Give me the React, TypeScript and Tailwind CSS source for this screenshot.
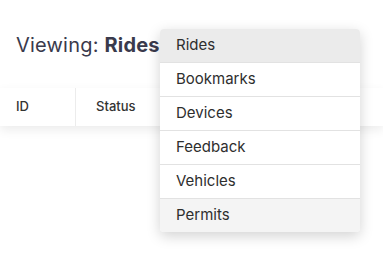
import React from 'react';

const items = ['Rides', 'Bookmarks', 'Devices', 'Feedback', 'Vehicles', 'Permits'];

export default function App() {
  return (
    <div className="relative h-[254px] w-[383px] overflow-hidden bg-white font-['Inter',sans-serif]">
      {/* Heading */}
      <div className="px-4 pt-[30px] h-[88px]">
        <h1 className="text-[20px] leading-[30px] tracking-[0.2px] text-[#3a3a4c]">
          Viewing: <span className="font-bold">Rides</span>
        </h1>
      </div>

      {/* Table header */}
      <div className="flex h-[38px] bg-white shadow-[0_4px_10px_rgba(0,0,0,0.08)]">
        <div className="flex w-[76px] items-center border-r border-[#ececec] pl-4 text-[13px] font-medium text-[#333]">
          ID
        </div>
        <div className="flex items-center pl-5 text-[13px] font-medium text-[#333]">Status</div>
      </div>

      {/* Dropdown */}
      <div className="absolute left-[160px] top-[29px] w-[200px] overflow-hidden rounded-[4px] bg-white shadow-[0_4px_14px_rgba(0,0,0,0.18)]">
        {items.map((item, i) => (
          <div
            key={item}
            className={
              'flex items-center px-4 text-[15px] text-[#2e2e2e] ' +
              (i > 0 ? 'h-[34px] border-t border-[#e2e2e2] ' : 'h-[33px] ') +
              (i === 0 ? 'bg-[#ebebeb]' : i === items.length - 1 ? 'bg-[#f4f4f4]' : 'bg-white')
            }
          >
            {item}
          </div>
        ))}
      </div>
    </div>
  );
}
